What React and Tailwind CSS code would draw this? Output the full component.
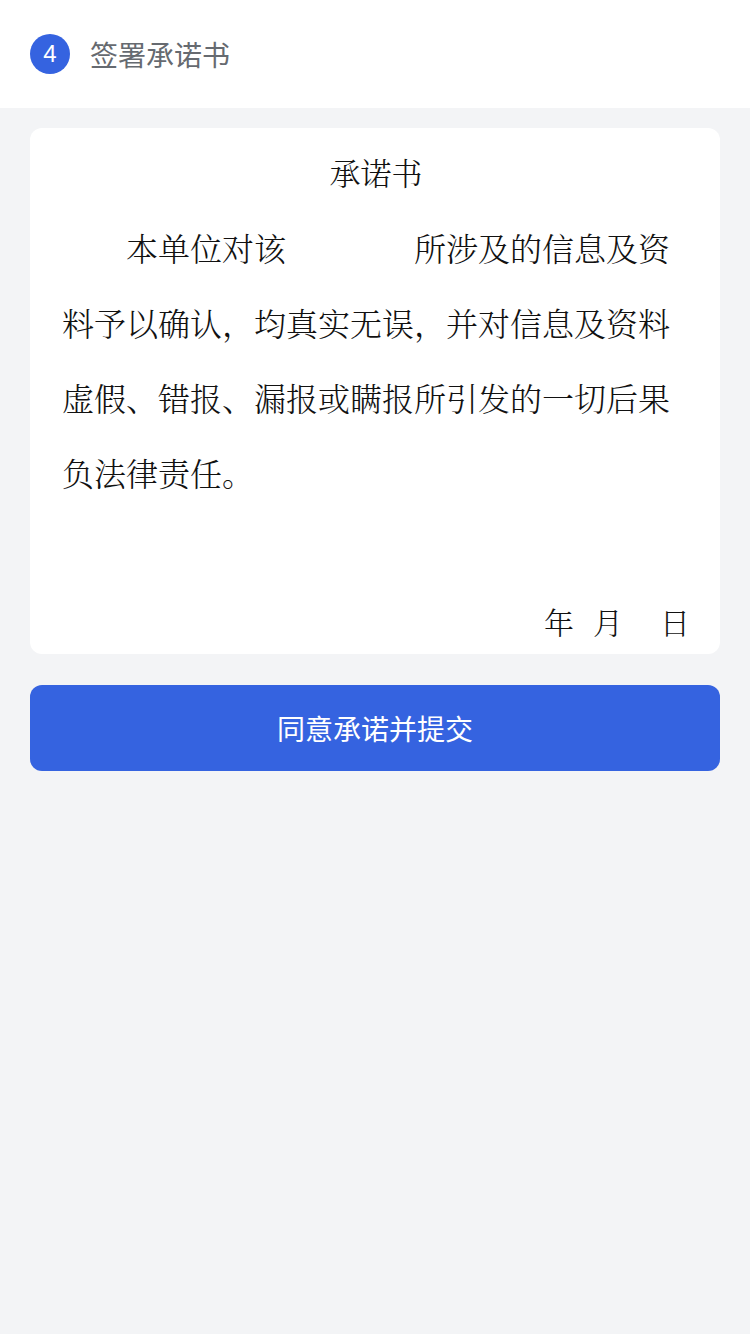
export default function App() {
    const serif = { fontFamily: '"Noto Serif CJK SC", "Liberation Serif", "Noto Sans CJK SC", serif' };

    return (
        <div className="min-h-[1334px] bg-[#f3f4f6] font-['Noto_Sans_CJK_SC',sans-serif]">
            <div className="h-[108px] bg-white flex items-center pl-[30px]">
                <div className="w-[40px] h-[40px] rounded-full bg-[#3563e0] flex items-center justify-center text-white text-[24px] font-['Liberation_Sans',sans-serif]">
                    4
                </div>
                <span className="ml-[20px] text-[28px] text-[#666a70] leading-none">签署承诺书</span>
            </div>

            <div className="px-[30px] pt-[20px]">
                <div className="bg-white rounded-[12px] pt-[22px] pb-[11px] pl-[32px] pr-[30px] text-[#111]" style={serif}>
                    <div className="text-center text-[31px] leading-[44px] font-light">承诺书</div>
                    <p className="mt-[16px] text-[32px] leading-[75px] indent-[64px] font-light whitespace-pre-wrap">
                        {'本单位对该\u3000\u3000\u3000\u3000所涉及的信息及资料予以确认，均真实无误，并对信息及资料虚假、错报、漏报或瞒报所引发的一切后果负法律责任。'}
                    </p>
                    <div className="mt-[89px] flex justify-end items-center text-[30px] leading-[44px] font-light">
                        <span>年</span>
                        <span className="ml-[19px]">月</span>
                        <span className="ml-[37px]">日</span>
                    </div>
                </div>

                <button className="mt-[31px] w-full h-[86px] rounded-[12px] bg-[#3563e0] text-white text-[28px] flex items-center justify-center">
                    同意承诺并提交
                </button>
            </div>
        </div>
    );
}
